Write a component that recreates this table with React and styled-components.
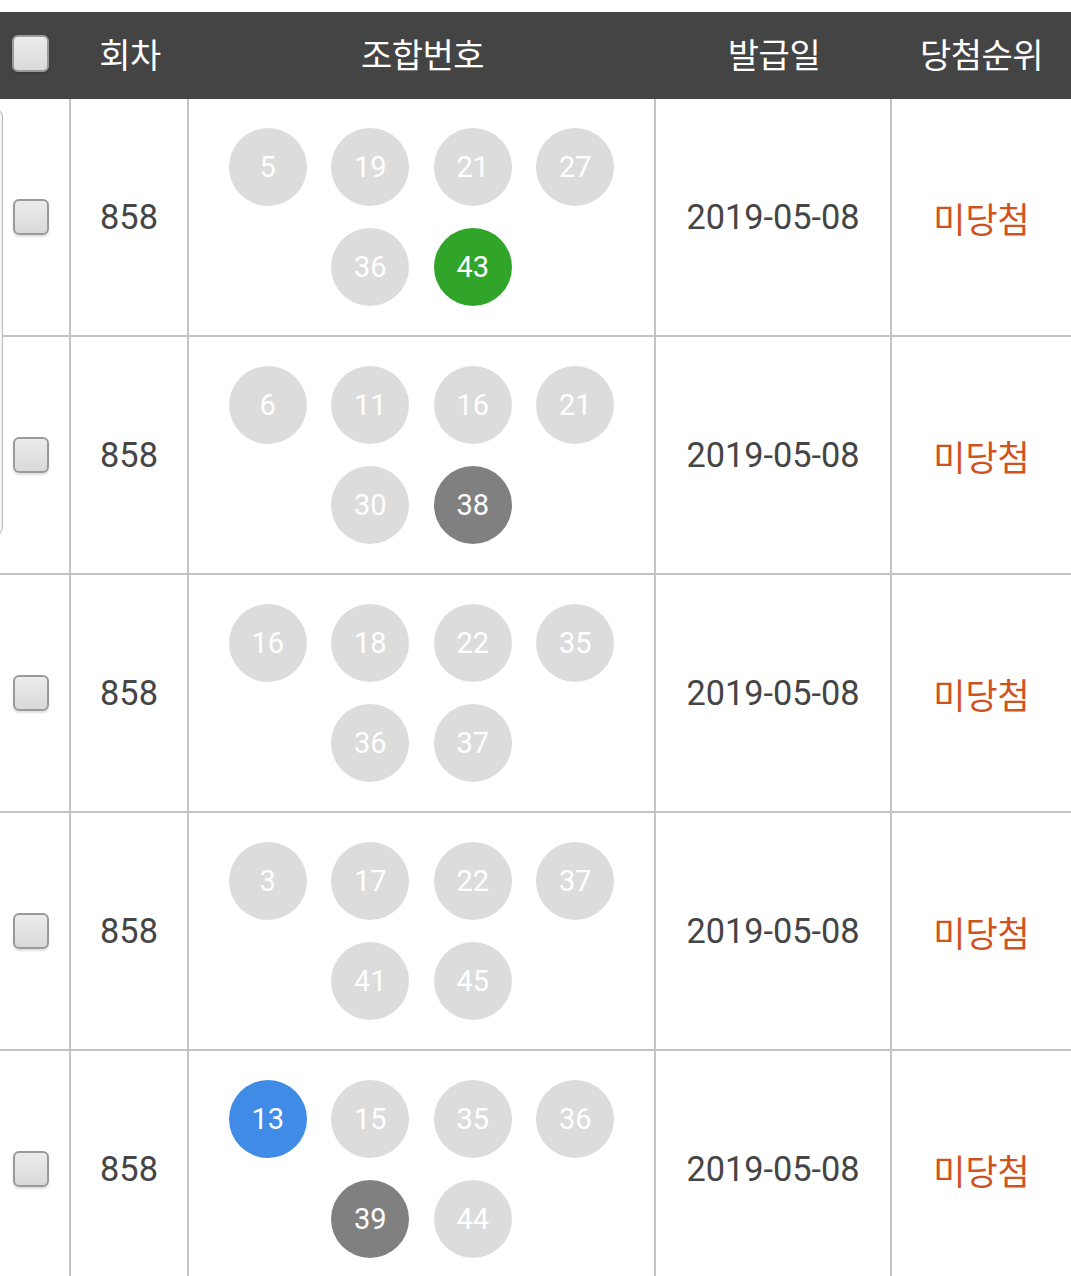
import React from 'react'
import styled, {createGlobalStyle} from 'styled-components'

const GlobalStyle = createGlobalStyle`
  html, body {
    margin: 0;
    padding: 0;
    background: #ffffff;
    font-family: Roboto, "Noto Sans CJK KR", "Noto Sans", sans-serif;
  }
`;

const COLS = '71px 118px 467px 236px 1fr';

const Page = styled.div`
  position: relative;
  width: 1071px;
  padding-top: 12px;
  overflow: hidden;
`;

const HeadRow = styled.div`
  display: grid;
  grid-template-columns: ${COLS};
  height: 87px;
  background: #444444;
  color: #ffffff;
`;

const HeadCell = styled.div`
  display: flex;
  align-items: center;
  justify-content: ${p => p.$left ? 'flex-start' : 'center'};
  padding-left: ${p => p.$left ? '12px' : '0'};
  padding-bottom: 4px;
  font-size: 34px;
  font-family: "Noto Sans CJK KR", Roboto, sans-serif;
  letter-spacing: -0.5px;
`;

const Row = styled.div`
  display: grid;
  grid-template-columns: ${COLS};
  height: 238px;
  border-bottom: 2px solid #c4c4c4;
  box-sizing: border-box;
`;

const Cell = styled.div`
  display: flex;
  align-items: center;
  justify-content: ${p => p.$left ? 'flex-start' : 'center'};
  padding-left: ${p => p.$left ? '13px' : '0'};
  border-right: ${p => p.$last ? 'none' : '2px solid #c4c4c4'};
  font-size: ${p => p.$kr ? '35px' : '34.3px'};
  color: ${p => p.$color || '#454545'};
  font-family: ${p => p.$kr ? '"Noto Sans CJK KR", Roboto, sans-serif' : 'Roboto, "Noto Sans CJK KR", sans-serif'};
`;

const Check = styled.span`
  display: block;
  width: ${p => p.$size}px;
  height: ${p => p.$size}px;
  box-sizing: border-box;
  border: 2px solid #9a9a9a;
  border-radius: 6px;
  background: linear-gradient(#ececec, #d9d9d9);
  box-shadow: 0 2px 2px rgba(0, 0, 0, 0.12);
`;

const Balls = styled.div`
  display: flex;
  flex-wrap: wrap;
  justify-content: center;
  width: 390px;
  column-gap: 24.5px;
  row-gap: 22px;
`;

const BALL_BG = {
  gray: '#dcdcdc',
  green: '#31a529',
  blue: '#3f8be6',
  dark: '#808080',
};

const Ball = styled.span`
  width: 78px;
  height: 78px;
  border-radius: 50%;
  background: ${p => BALL_BG[p.$tone]};
  color: #ffffff;
  font-size: 29px;
  display: flex;
  align-items: center;
  justify-content: center;
  font-family: Roboto, sans-serif;
`;

const EdgeTab = styled.div`
  position: absolute;
  left: -6px;
  top: 108px;
  width: 9px;
  height: 428px;
  box-sizing: border-box;
  border: 1px solid #b8b8b8;
  border-radius: 0 9px 9px 0;
  background: #f6f6f6;
`;

const rows = [
  [[5], [19], [21], [27], [36], [43, 'green']],
  [[6], [11], [16], [21], [30], [38, 'dark']],
  [[16], [18], [22], [35], [36], [37]],
  [[3], [17], [22], [37], [41], [45]],
  [[13, 'blue'], [15], [35], [36], [39, 'dark'], [44]],
];

const App = () => {
  return (
    <Page>
      <GlobalStyle />
      <HeadRow>
        <HeadCell $left><Check $size={37} /></HeadCell>
        <HeadCell>회차</HeadCell>
        <HeadCell>조합번호</HeadCell>
        <HeadCell>발급일</HeadCell>
        <HeadCell>당첨순위</HeadCell>
      </HeadRow>
      {rows.map((balls, i) => (
        <Row key={i}>
          <Cell $left><Check $size={36} /></Cell>
          <Cell>858</Cell>
          <Cell>
            <Balls>
              {balls.map(([n, tone], j) => (
                <Ball key={j} $tone={tone || 'gray'}>{n}</Ball>
              ))}
            </Balls>
          </Cell>
          <Cell>2019-05-08</Cell>
          <Cell $last $kr $color="#d0531f">미당첨</Cell>
        </Row>
      ))}
      <EdgeTab />
    </Page>
  )
}

export default App;
